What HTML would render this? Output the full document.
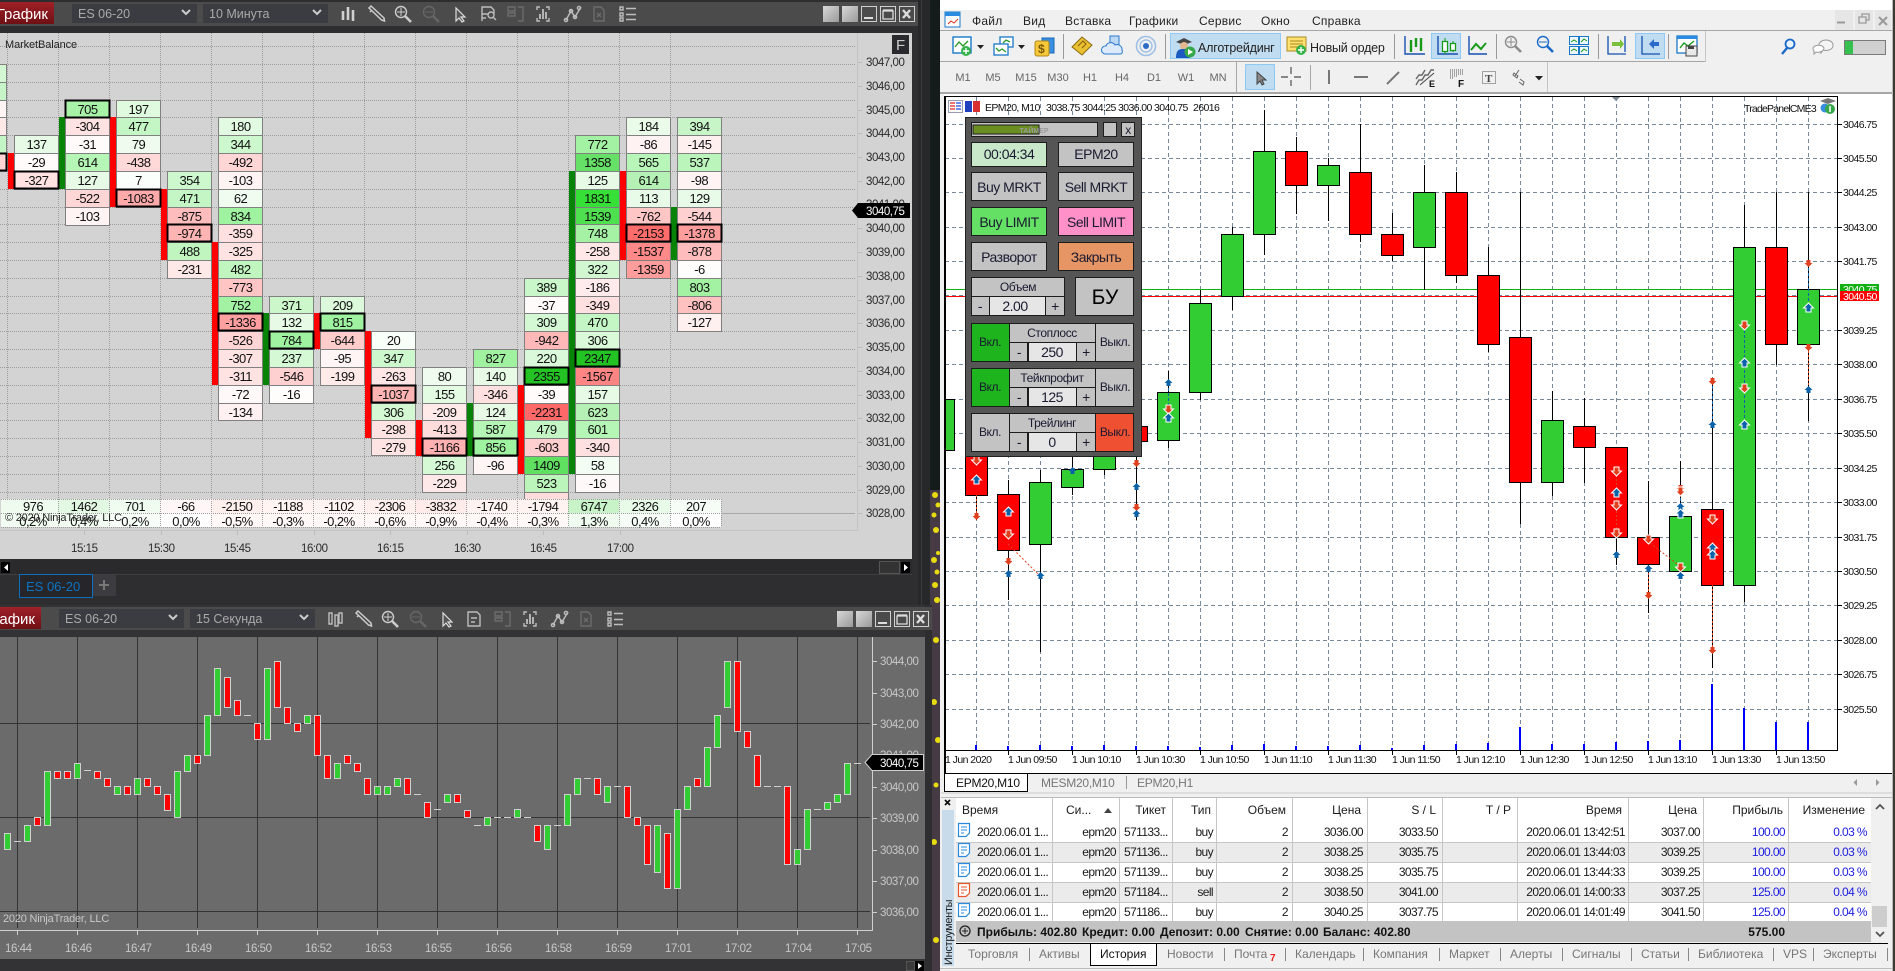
<!DOCTYPE html>
<html><head><meta charset="utf-8"><title>Trading</title>
<style>
html,body{margin:0;padding:0;background:#111;overflow:hidden;width:1895px;height:971px}
svg{display:block}
text{font-family:"Liberation Sans","Noto Sans CJK JP",sans-serif;font-size:12px;fill:#111}
.c rect{width:44px;height:18px;stroke:#808080;stroke-width:1}
.c rect.b{stroke:#000;stroke-width:2;fill:none;height:17px}
.c text{text-anchor:middle;font-size:13px;letter-spacing:-.55px}
.sm text{text-anchor:middle;font-size:13px;letter-spacing:-.55px}
.ax text{fill:#2a2a2a;font-size:11.5px;letter-spacing:-.45px}
.ax2 text{fill:#c8c8c8;font-size:11.5px;letter-spacing:-.45px}
.tag{fill:#fff;font-size:11.5px;letter-spacing:-.45px}
.tb{fill:none;stroke:#bdbdbd;stroke-width:1.4}
.tbd{fill:none;stroke:#6c6c6c;stroke-width:1.4}
.m text{font-size:12px;fill:#222;letter-spacing:.25px}
.tf text{font-size:11px;fill:#666;text-anchor:middle}
.pa text{font-size:10.5px;letter-spacing:-.6px;fill:#111}
.tl text{font-size:10.5px;letter-spacing:-.55px;fill:#111}
.hd{font-size:10.5px;letter-spacing:-.6px}
.btn rect{stroke:#1c1c1c;stroke-width:1}
.btn text{text-anchor:middle;font-size:14px;letter-spacing:-.5px;fill:#1a1a30}
.btn .s{font-size:12px;letter-spacing:-.4px}
.tbl text{fill:#1a1a1a}
.r text{text-anchor:end}
.d text{letter-spacing:-.6px}
.bl text{fill:#1c1ce0;letter-spacing:-.6px}
.tabs text{fill:#777}
.hb text{font-weight:bold;font-size:12px;fill:#111}
</style></head><body>
<svg xmlns="http://www.w3.org/2000/svg" width="1895" height="971" viewBox="0 0 1895 971">
<defs>
<g id="zp"><circle cx="-2" cy="-2" r="5.5" fill="none" stroke-width="1.4"/><path d="M2-2h-8M-2-6V2" stroke-width="1"/><path d="M2 2l6 6" stroke-width="2.6"/></g>
<g id="zm"><circle cx="-2" cy="-2" r="5.5" fill="none" stroke-width="1.4"/><path d="M2-2h-8" stroke-width="1"/><path d="M2 2l6 6" stroke-width="2.6"/></g>
<path id="mb" d="M0-4L4 0H2V3H-2V0H-4z" fill="#0a62a8"/>
<path id="mr" d="M0 4L4 0H2V-3H-2V0H-4z" fill="#e0401e"/>
<path id="mbo" d="M0-5L5 0H2.5V4H-2.5V0H-5z" fill="#0a62a8" stroke="#fff"/>
<path id="mro" d="M0 5L5 0H2.5V-4H-2.5V0H-5z" fill="#e0401e" stroke="#fff"/>
<g id="doc"><path d="M.5.5H11.5V10L8 13.5H.5z" fill="#fff" stroke="currentColor" stroke-width="1.2"/><path d="M3 4h6M3 7h6M3 10h3" stroke="currentColor" fill="none"/></g>
<linearGradient id="red" x1="0" y1="0" x2="0" y2="1"><stop offset="0" stop-color="#a02028"/><stop offset="1" stop-color="#6e1014"/></linearGradient>
<linearGradient id="wb" x1="0" y1="0" x2="1" y2="1"><stop offset="0" stop-color="#d8d8d8"/><stop offset="1" stop-color="#9a9a9a"/></linearGradient>
</defs>

<!-- wallpaper -->
<rect x="918" y="0" width="24" height="490" fill="#131c1a"/>
<rect x="925" y="490" width="17" height="481" fill="#463a44"/>
<rect x="1890" y="0" width="5" height="971" fill="#3a3a30"/>
<g fill="#e8dc10"><circle cx="935" cy="495" r="3"/><circle cx="938" cy="505" r="2.5"/><circle cx="934" cy="515" r="2.5"/><circle cx="936" cy="530" r="3"/><circle cx="938" cy="553" r="2"/><circle cx="934" cy="560" r="3"/><circle cx="937" cy="572" r="2.5"/><circle cx="935" cy="585" r="3"/><circle cx="937" cy="600" r="3"/><circle cx="936" cy="640" r="3"/><circle cx="934" cy="702" r="3"/><circle cx="938" cy="740" r="3"/><circle cx="936" cy="785" r="2.5"/><circle cx="934" cy="842" r="3"/><circle cx="936" cy="940" r="3"/></g>

<!-- TOP WINDOW -->
<rect x="0" y="0" width="918" height="605" fill="#2e2e30"/>
<rect x="918" y="0" width="12" height="605" fill="#26282a"/>
<rect x="921" y="0" width="1" height="605" fill="#3c3c3e"/>
<rect x="0" y="2" width="918" height="24" fill="#4b4b4b"/>
<rect x="0" y="2" width="54" height="22" fill="url(#red)"/>
<text x="48" y="19" text-anchor="end" style="font-size:15px;fill:#fff">График</text>
<rect x="72" y="4" width="125" height="19" fill="#3b3b42"/><text x="78" y="18" style="font-size:12.5px;fill:#aaa">ES 06-20</text>
<path d="M182 10l4 4 4-4" fill="none" stroke="#ccc" stroke-width="2"/>
<rect x="203" y="4" width="125" height="19" fill="#3b3b42"/><text x="209" y="18" style="font-size:12.5px;fill:#aaa">10 Минута</text>
<path d="M313 10l4 4 4-4" fill="none" stroke="#ccc" stroke-width="2"/>
<path d="M343 11v9M348 7v13M353 10v11" stroke="#d0d0d0" stroke-width="2.6" fill="none"/>
<path d="M369 8l2-2 13 12 .5 3-3-1zM372 10l-2 2" fill="none" stroke="#ccc" stroke-width="1.5"/>
<use href="#zp" x="403" y="14" stroke="#ccc"/>
<use href="#zm" x="431" y="14" stroke="#666"/>
<path d="M456 8v13l3-3 3 4 2-1-3-4h4z" fill="#555" stroke="#ddd" stroke-width="1.2"/>
<path class="tb" d="M482 21V7h9l3 3v4M482 14h6M482 18h4"/><circle cx="491" cy="15" r="3" class="tb"/><path d="M493 17l3 3" class="tb"/>
<path class="tbd" d="M508 7h7v4h-7zM508 13h7v3h-7zM518 7h5v14h-5"/>
<path class="tb" d="M537 10V7h3M546 7h3v3M537 18v3h3M546 21h3v-3"/><path d="M540 19v-5M543 19V9M546 19v-7" stroke="#ccc" stroke-width="1.6" fill="none"/>
<path class="tb" d="M566 20l5-9 4 6 6-10"/><circle cx="566" cy="20" r="1.6" class="tb"/><circle cx="571" cy="11" r="1.6" class="tb"/><circle cx="575" cy="17" r="1.6" class="tb"/><circle cx="579" cy="8" r="1.6" class="tb"/>
<path class="tbd" d="M594 7h7l3 3v11h-10zM597 13l4 4M601 13l-4 4"/>
<path class="tb" d="M620 7h3v3h-3zM620 13h3v3h-3zM620 18h3v3h-3zM626 8.500h10M626 14.500h10M626 19.500h10"/>
<g><rect x="823" y="6" width="16" height="16" fill="url(#wb)"/><rect x="842" y="6" width="16" height="16" fill="url(#wb)"/>
<g fill="none" stroke="#cfcfcf"><rect x="861.500" y="6.500" width="15" height="15"/><rect x="880.500" y="6.500" width="15" height="15"/><rect x="899.500" y="6.500" width="15" height="15"/></g>
<path d="M864 18h9" stroke="#ddd" stroke-width="2"/><path d="M883 11h10v8h-10z M883 10h10" fill="none" stroke="#ddd" stroke-width="1.3"/><path d="M903 10l7 8M910 10l-7 8" stroke="#ddd" stroke-width="2.4"/></g>

<rect x="0" y="33" width="912" height="526" fill="#d3d3d3"/>
<path d="M857.500 33V530M0 530.500H858M0 513.500H855" stroke="#c4c4c4" fill="none"/>
<path d="M721 513.500H855" stroke="#a8a8a8" fill="none"/>
<path fill="none" stroke="#9d9d9d" stroke-dasharray="1 1" d="M0 46.500H855M0 64.500H855M0 82.500H855M0 100.500H855M0 117.500H855M0 135.500H855M0 153.500H855M0 171.500H855M0 189.500H855M0 207.500H855M0 224.500H855M0 242.500H855M0 260.500H855M0 278.500H855M0 296.500H855M0 313.500H855M0 331.500H855M0 349.500H855M0 367.500H855M0 385.500H855M0 403.500H855M0 420.500H855M0 438.500H855M0 456.500H855M0 474.500H855M0 492.500H855M7.500 33V527M58.500 33V527M109.500 33V527M160.500 33V527M211.500 33V527M262.500 33V527M313.500 33V527M364.500 33V527M415.500 33V527M466.500 33V527M517.500 33V527M568.500 33V527M619.500 33V527M670.500 33V527"/>
<text x="5" y="48" style="font-size:11px;letter-spacing:-.1px;fill:#222">MarketBalance</text>

<!-- delta bars -->
<g fill="#f00"><rect x="8" y="153" width="6" height="36"/><rect x="110" y="117" width="6" height="90"/><rect x="161" y="189" width="6" height="71"/><rect x="212" y="242" width="6" height="143"/><rect x="314" y="313" width="6" height="36"/><rect x="365" y="331" width="6" height="107"/><rect x="416" y="420" width="6" height="36"/><rect x="518" y="385" width="6" height="89"/><rect x="620" y="171" width="6" height="89"/></g>
<g fill="#078307"><rect x="59" y="117" width="6" height="72"/><rect x="263" y="313" width="6" height="72"/><rect x="467" y="403" width="6" height="53"/><rect x="569" y="171" width="6" height="303"/><rect x="671" y="207" width="6" height="53"/></g>

<!-- footprint columns -->
<g class="c">
<g transform="translate(-37.5,0)"><rect y="64.500" fill="#d2f7d2"/><rect y="82.500" fill="#c8f5c8"/><rect y="100.500" fill="#fff4f4"/><rect y="117.500" fill="#ffe8e8"/><rect y="135.500" fill="#c4f5c4"/><rect y="153.500" fill="#ffd4d4"/><rect class="b" y="153.500"/></g>
<g transform="translate(14.5,0)"><rect y="135.500" fill="#e6fae6"/><text x="22" y="149">137</text><rect y="153.500" fill="#fffbfb"/><text x="22" y="167">-29</text><rect y="171.500" fill="#ffe1e1"/><text x="22" y="185">-327</text><rect class="b" y="171.500"/></g>
<g transform="translate(65.5,0)"><rect y="100.500" fill="#a8f2a8"/><text x="22" y="114">705</text><rect y="117.500" fill="#ffe2e2"/><text x="22" y="131">-304</text><rect y="135.500" fill="#fffbfb"/><text x="22" y="149">-31</text><rect y="153.500" fill="#b5f5b5"/><text x="22" y="167">614</text><rect y="171.500" fill="#e6fae6"/><text x="22" y="185">127</text><rect y="189.500" fill="#ffd6d6"/><text x="22" y="203">-522</text><rect y="207.500" fill="#fff4f4"/><text x="22" y="221">-103</text><rect class="b" y="100.500"/></g>
<g transform="translate(116.5,0)"><rect y="100.500" fill="#dffadf"/><text x="22" y="114">197</text><rect y="117.500" fill="#c4f5c4"/><text x="22" y="131">477</text><rect y="135.500" fill="#eefbee"/><text x="22" y="149">79</text><rect y="153.500" fill="#ffd8d8"/><text x="22" y="167">-438</text><rect y="171.500" fill="#fbfffb"/><text x="22" y="185">7</text><rect y="189.500" fill="#ffaaaa"/><text x="22" y="203">-1083</text><rect class="b" y="189.500"/></g>
<g transform="translate(167.5,0)"><rect y="171.500" fill="#cdf7cd"/><text x="22" y="185">354</text><rect y="189.500" fill="#c4f5c4"/><text x="22" y="203">471</text><rect y="207.500" fill="#ffbcbc"/><text x="22" y="221">-875</text><rect y="224.500" fill="#ffb4b4"/><text x="22" y="238">-974</text><rect y="242.500" fill="#c0f5c0"/><text x="22" y="256">488</text><rect y="260.500" fill="#ffe8e8"/><text x="22" y="274">-231</text><rect class="b" y="224.500"/></g>
<g transform="translate(218.5,0)"><rect y="117.500" fill="#e1fae1"/><text x="22" y="131">180</text><rect y="135.500" fill="#cdf7cd"/><text x="22" y="149">344</text><rect y="153.500" fill="#ffd6d6"/><text x="22" y="167">-492</text><rect y="171.500" fill="#fff4f4"/><text x="22" y="185">-103</text><rect y="189.500" fill="#f0fcf0"/><text x="22" y="203">62</text><rect y="207.500" fill="#9ff29f"/><text x="22" y="221">834</text><rect y="224.500" fill="#ffe0e0"/><text x="22" y="238">-359</text><rect y="242.500" fill="#ffe2e2"/><text x="22" y="256">-325</text><rect y="260.500" fill="#c0f5c0"/><text x="22" y="274">482</text><rect y="278.500" fill="#ffc4c4"/><text x="22" y="292">-773</text><rect y="296.500" fill="#a3f2a3"/><text x="22" y="310">752</text><rect y="313.500" fill="#ffa0a0"/><text x="22" y="327">-1336</text><rect y="331.500" fill="#ffd4d4"/><text x="22" y="345">-526</text><rect y="349.500" fill="#ffe2e2"/><text x="22" y="363">-307</text><rect y="367.500" fill="#ffe2e2"/><text x="22" y="381">-311</text><rect y="385.500" fill="#fff8f8"/><text x="22" y="399">-72</text><rect y="403.500" fill="#fff1f1" style="height:17px"/><text x="22" y="417">-134</text><rect class="b" y="313.500"/></g>
<g transform="translate(269.500,0)"><rect y="296.500" fill="#cbf7cb"/><text x="22" y="310">371</text><rect y="313.500" fill="#e6fae6"/><text x="22" y="327">132</text><rect y="331.500" fill="#9ff29f"/><text x="22" y="345">784</text><rect y="349.500" fill="#d5f8d5"/><text x="22" y="363">237</text><rect y="367.500" fill="#ffd0d0"/><text x="22" y="381">-546</text><rect y="385.500" fill="#fffcfc"/><text x="22" y="399">-16</text><rect class="b" y="331.500"/></g>
<g transform="translate(320.500,0)"><rect y="296.500" fill="#dcf9dc"/><text x="22" y="310">209</text><rect y="313.500" fill="#9ff29f"/><text x="22" y="327">815</text><rect y="331.500" fill="#ffcccc"/><text x="22" y="345">-644</text><rect y="349.500" fill="#fff5f5"/><text x="22" y="363">-95</text><rect y="367.500" fill="#ffeaea"/><text x="22" y="381">-199</text><rect class="b" y="313.500"/></g>
<g transform="translate(371.500,0)"><rect y="331.500" fill="#f8fef8"/><text x="22" y="345">20</text><rect y="349.500" fill="#cdf7cd"/><text x="22" y="363">347</text><rect y="367.500" fill="#ffe6e6"/><text x="22" y="381">-263</text><rect y="385.500" fill="#ffb4b4"/><text x="22" y="399">-1037</text><rect y="403.500" fill="#d3f8d3"/><text x="22" y="417">306</text><rect y="420.500" fill="#ffe2e2"/><text x="22" y="434">-298</text><rect y="438.500" fill="#ffe4e4" style="height:17px"/><text x="22" y="452">-279</text><rect class="b" y="385.500"/></g>
<g transform="translate(422.500,0)"><rect y="367.500" fill="#eefbee"/><text x="22" y="381">80</text><rect y="385.500" fill="#e3fae3"/><text x="22" y="399">155</text><rect y="403.500" fill="#ffe9e9"/><text x="22" y="417">-209</text><rect y="420.500" fill="#ffdcdc"/><text x="22" y="434">-413</text><rect y="438.500" fill="#ffb0b0"/><text x="22" y="452">-1166</text><rect y="456.500" fill="#d5f8d5"/><text x="22" y="470">256</text><rect y="474.500" fill="#ffe8e8"/><text x="22" y="488">-229</text><rect class="b" y="438.500"/></g>
<g transform="translate(473.500,0)"><rect y="349.500" fill="#a0f2a0"/><text x="22" y="363">827</text><rect y="367.500" fill="#e6fae6"/><text x="22" y="381">140</text><rect y="385.500" fill="#ffe0e0"/><text x="22" y="399">-346</text><rect y="403.500" fill="#e6fae6"/><text x="22" y="417">124</text><rect y="420.500" fill="#b5f5b5"/><text x="22" y="434">587</text><rect y="438.500" fill="#9ff29f"/><text x="22" y="452">856</text><rect y="456.500" fill="#fff5f5"/><text x="22" y="470">-96</text><rect class="b" y="438.500"/></g>
<g transform="translate(524.500,0)"><rect y="278.500" fill="#c9f7c9"/><text x="22" y="292">389</text><rect y="296.500" fill="#fffbfb"/><text x="22" y="310">-37</text><rect y="313.500" fill="#d3f8d3"/><text x="22" y="327">309</text><rect y="331.500" fill="#ffb8b8"/><text x="22" y="345">-942</text><rect y="349.500" fill="#daf9da"/><text x="22" y="363">220</text><rect y="367.500" fill="#22c322"/><text x="22" y="381">2355</text><rect y="385.500" fill="#fffbfb"/><text x="22" y="399">-39</text><rect y="403.500" fill="#ff6868"/><text x="22" y="417">-2231</text><rect y="420.500" fill="#c4f5c4"/><text x="22" y="434">479</text><rect y="438.500" fill="#ffcece"/><text x="22" y="452">-603</text><rect y="456.500" fill="#60e060"/><text x="22" y="470">1409</text><rect y="474.500" fill="#bbf5bb"/><text x="22" y="488">523</text><rect y="492.500" fill="#ffdcdc"/><rect class="b" y="367.500"/></g>
<g transform="translate(575.500,0)"><rect y="135.500" fill="#a3f2a3"/><text x="22" y="149">772</text><rect y="153.500" fill="#66e066"/><text x="22" y="167">1358</text><rect y="171.500" fill="#e6fae6"/><text x="22" y="185">125</text><rect y="189.500" fill="#36e036"/><text x="22" y="203">1831</text><rect y="207.500" fill="#4ee04e"/><text x="22" y="221">1539</text><rect y="224.500" fill="#a5f2a5"/><text x="22" y="238">748</text><rect y="242.500" fill="#ffe7e7"/><text x="22" y="256">-258</text><rect y="260.500" fill="#d0f7d0"/><text x="22" y="274">322</text><rect y="278.500" fill="#ffebeb"/><text x="22" y="292">-186</text><rect y="296.500" fill="#ffe0e0"/><text x="22" y="310">-349</text><rect y="313.500" fill="#c4f5c4"/><text x="22" y="327">470</text><rect y="331.500" fill="#d9f9d9"/><text x="22" y="345">306</text><rect y="349.500" fill="#22c322"/><text x="22" y="363">2347</text><rect y="367.500" fill="#ff8484"/><text x="22" y="381">-1567</text><rect y="385.500" fill="#e6fae6"/><text x="22" y="399">157</text><rect y="403.500" fill="#b5f0b5"/><text x="22" y="417">623</text><rect y="420.500" fill="#b5f5b5"/><text x="22" y="434">601</text><rect y="438.500" fill="#ffe0e0"/><text x="22" y="452">-340</text><rect y="456.500" fill="#f4fdf4"/><text x="22" y="470">58</text><rect y="474.500" fill="#fff8f8"/><text x="22" y="488">-16</text><rect class="b" y="349.500"/></g>
<g transform="translate(626.500,0)"><rect y="117.500" fill="#eafbea"/><text x="22" y="131">184</text><rect y="135.500" fill="#fff2f2"/><text x="22" y="149">-86</text><rect y="153.500" fill="#b8f5b8"/><text x="22" y="167">565</text><rect y="171.500" fill="#b5f0b5"/><text x="22" y="185">614</text><rect y="189.500" fill="#e8fbe8"/><text x="22" y="203">113</text><rect y="207.500" fill="#ffc6c6"/><text x="22" y="221">-762</text><rect y="224.500" fill="#ff6c6c"/><text x="22" y="238">-2153</text><rect y="242.500" fill="#ff8888"/><text x="22" y="256">-1537</text><rect y="260.500" fill="#ff9c9c"/><text x="22" y="274">-1359</text><rect class="b" y="224.500"/></g>
<g transform="translate(677.500,0)"><rect y="117.500" fill="#c8f5c8"/><text x="22" y="131">394</text><rect y="135.500" fill="#fff0f0"/><text x="22" y="149">-145</text><rect y="153.500" fill="#bcf5bc"/><text x="22" y="167">537</text><rect y="171.500" fill="#fff3f3"/><text x="22" y="185">-98</text><rect y="189.500" fill="#e8fbe8"/><text x="22" y="203">129</text><rect y="207.500" fill="#ffd0d0"/><text x="22" y="221">-544</text><rect y="224.500" fill="#ff9c9c"/><text x="22" y="238">-1378</text><rect y="242.500" fill="#ffbcbc"/><text x="22" y="256">-878</text><rect y="260.500" fill="#fffcfc"/><text x="22" y="274">-6</text><rect y="278.500" fill="#a3f2a3"/><text x="22" y="292">803</text><rect y="296.500" fill="#ffc0c0"/><text x="22" y="310">-806</text><rect y="313.500" fill="#fff0f0"/><text x="22" y="327">-127</text><rect class="b" y="224.500"/></g>
</g>

<!-- summary rows -->
<g>
<rect x="1" y="499" width="57" height="14" fill="#eefbee"/><rect x="58" y="499" width="51" height="14" fill="#e3f8e3"/><rect x="109" y="499" width="51" height="14" fill="#f1fcf1"/><rect x="160" y="499" width="51" height="14" fill="#fff7f7"/><rect x="211" y="499" width="51" height="14" fill="#fff0ee"/><rect x="262" y="499" width="51" height="14" fill="#fff4f2"/><rect x="313" y="499" width="51" height="14" fill="#fff4f2"/><rect x="364" y="499" width="51" height="14" fill="#ffefed"/><rect x="415" y="499" width="51" height="14" fill="#ffecea"/><rect x="466" y="499" width="51" height="14" fill="#fff3f1"/><rect x="517" y="499" width="51" height="14" fill="#fff3f1"/><rect x="568" y="499" width="51" height="14" fill="#c8f2c8"/><rect x="619" y="499" width="51" height="14" fill="#e8fae8"/><rect x="670" y="499" width="51" height="14" fill="#f6fdf6"/>
<rect x="1" y="513" width="108" height="14" fill="#f2fcf2"/><rect x="109" y="513" width="51" height="14" fill="#f8fef8"/><rect x="160" y="513" width="51" height="14" fill="#fff"/><rect x="211" y="513" width="357" height="14" fill="#fff8f7"/><rect x="568" y="513" width="51" height="14" fill="#eefbee"/><rect x="619" y="513" width="51" height="14" fill="#f6fdf6"/><rect x="670" y="513" width="51" height="14" fill="#fff"/>
<path fill="none" stroke="#9d9d9d" stroke-dasharray="1 1" d="M1 513.500H721M1 499.500H721M1 527.500H721M58.500 499V527M109.500 499V527M160.500 499V527M211.500 499V527M262.500 499V527M313.500 499V527M364.500 499V527M415.500 499V527M466.500 499V527M517.500 499V527M568.500 499V527M619.500 499V527M670.500 499V527M721.500 499V527"/>
<g class="sm"><text x="33" y="511">976</text><text x="84" y="511">1462</text><text x="135" y="511">701</text><text x="186" y="511">-66</text><text x="237" y="511">-2150</text><text x="288" y="511">-1188</text><text x="339" y="511">-1102</text><text x="390" y="511">-2306</text><text x="441" y="511">-3832</text><text x="492" y="511">-1740</text><text x="543" y="511">-1794</text><text x="594" y="511">6747</text><text x="645" y="511">2326</text><text x="696" y="511">207</text>
<text x="33" y="526">0,2%</text><text x="84" y="526">0,4%</text><text x="135" y="526">0,2%</text><text x="186" y="526">0,0%</text><text x="237" y="526">-0,5%</text><text x="288" y="526">-0,3%</text><text x="339" y="526">-0,2%</text><text x="390" y="526">-0,6%</text><text x="441" y="526">-0,9%</text><text x="492" y="526">-0,4%</text><text x="543" y="526">-0,3%</text><text x="594" y="526">1,3%</text><text x="645" y="526">0,4%</text><text x="696" y="526">0,0%</text></g>
<text x="5" y="521" style="font-size:11px;letter-spacing:-.2px;fill:#222">© 2020 NinjaTrader, LLC</text>
</g>

<!-- top axes -->
<g class="ax">
<text x="866" y="66">3047,00</text><text x="866" y="90">3046,00</text><text x="866" y="114">3045,00</text><text x="866" y="137">3044,00</text><text x="866" y="161">3043,00</text><text x="866" y="185">3042,00</text><text x="866" y="208">3041,00</text><text x="866" y="232">3040,00</text><text x="866" y="256">3039,00</text><text x="866" y="280">3038,00</text><text x="866" y="304">3037,00</text><text x="866" y="327">3036,00</text><text x="866" y="351">3035,00</text><text x="866" y="375">3034,00</text><text x="866" y="399">3033,00</text><text x="866" y="422">3032,00</text><text x="866" y="446">3031,00</text><text x="866" y="470">3030,00</text><text x="866" y="494">3029,00</text><text x="866" y="517">3028,00</text>
<text x="71" y="552">15:15</text><text x="148" y="552">15:30</text><text x="224" y="552">15:45</text><text x="301" y="552">16:00</text><text x="377" y="552">16:15</text><text x="454" y="552">16:30</text><text x="530" y="552">16:45</text><text x="607" y="552">17:00</text>
</g>
<path d="M858 62.500h4M858 86.500h4M858 110.500h4M858 133.500h4M858 157.500h4M858 181.500h4M858 228.500h4M858 252.500h4M858 276.500h4M858 300.500h4M858 323.500h4M858 347.500h4M858 371.500h4M858 395.500h4M858 418.500h4M858 442.500h4M858 466.500h4M858 490.500h4M858 513.500h4M84.500 530v5M161.500 530v5M237.500 530v5M314.500 530v5M390.500 530v5M467.500 530v5M543.500 530v5M620.500 530v5" stroke="#bcbcbc" fill="none"/>
<path d="M852 210.500l6-7.500H910V218H858z" fill="#000"/><text x="866" y="215" class="tag">3040,75</text>
<rect x="892" y="35" width="17" height="19" fill="#2a2a2e"/><text x="896" y="50" style="font-size:15px;fill:#ccc">F</text>

<!-- scroll band + tab -->
<rect x="0" y="559" width="912" height="15" fill="#2a2a2c"/>
<rect x="0" y="574" width="912" height="1" fill="#3e3e40"/>
<rect x="1" y="562" width="9" height="11" fill="#000"/><path d="M8 564v7l-4-3.500z" fill="#fff"/>
<rect x="901" y="562" width="9" height="11" fill="#000"/><path d="M904 564v7l4-3.500z" fill="#fff"/>
<rect x="879.500" y="561.500" width="20" height="12" fill="#333" stroke="#555"/>
<rect x="19.500" y="574.500" width="73" height="23" fill="#26262a" stroke="#0b6fbe"/><text x="26" y="591" style="font-size:13px;fill:#0b74c4">ES 06-20</text>
<rect x="93" y="575" width="23" height="21" fill="#3c3c40"/><path d="M99 585h10M104 580v10" stroke="#777" stroke-width="2"/>

<!-- BOTTOM WINDOW -->
<rect x="0" y="605" width="925" height="366" fill="#333335"/>
<rect x="925" y="605" width="7" height="366" fill="#2e2e30"/>
<rect x="0" y="607" width="932" height="23" fill="#4b4b4b"/>
<rect x="0" y="607" width="41" height="22" fill="url(#red)"/>
<text x="35" y="624" text-anchor="end" style="font-size:15px;fill:#fff">График</text>
<rect x="59" y="609" width="125" height="19" fill="#3b3b42"/><text x="65" y="623" style="font-size:12.5px;fill:#aaa">ES 06-20</text>
<path d="M169 615l4 4 4-4" fill="none" stroke="#ccc" stroke-width="2"/>
<rect x="190" y="609" width="125" height="19" fill="#3b3b42"/><text x="196" y="623" style="font-size:12.5px;fill:#aaa">15 Секунда</text>
<path d="M300 615l4 4 4-4" fill="none" stroke="#ccc" stroke-width="2"/>
<path class="tb" d="M329 613h3v11h-3zM335 615h3v11h-3zM339 613h3v10h-3z"/>
<path d="M356 613l2-2 13 12 .5 3-3-1zM359 615l-2 2" fill="none" stroke="#ccc" stroke-width="1.5"/>
<use href="#zp" x="390" y="619" stroke="#ccc"/>
<use href="#zm" x="418" y="619" stroke="#666"/>
<path d="M443 613v13l3-3 3 4 2-1-3-4h4z" fill="#555" stroke="#ddd" stroke-width="1.2"/>
<path class="tb" d="M468 626V612h9l3 3v11zM471 618h6M471 622h4"/>
<path class="tbd" d="M495 612h7v4h-7zM495 618h7v3h-7zM505 612h5v14h-5"/>
<path class="tb" d="M524 615v-3h3M533 612h3v3M524 623v3h3M533 626h3v-3"/><path d="M527 624v-5M530 624v-10M533 624v-7" stroke="#ccc" stroke-width="1.6" fill="none"/>
<path class="tb" d="M553 625l5-9 4 6 6-10"/><circle cx="553" cy="625" r="1.6" class="tb"/><circle cx="558" cy="616" r="1.6" class="tb"/><circle cx="562" cy="622" r="1.6" class="tb"/><circle cx="566" cy="613" r="1.6" class="tb"/>
<path class="tbd" d="M581 612h7l3 3v11h-10zM584 618l4 4M588 618l-4 4"/>
<path class="tb" d="M608 612h3v3h-3zM608 618h3v3h-3zM608 623h3v3h-3zM614 613.500h9M614 619.500h9M614 624.500h9"/>
<rect x="837" y="611" width="16" height="16" fill="url(#wb)"/><rect x="856" y="611" width="16" height="16" fill="url(#wb)"/>
<g fill="none" stroke="#cfcfcf"><rect x="875.500" y="611.500" width="15" height="15"/><rect x="894.500" y="611.500" width="15" height="15"/><rect x="913.500" y="611.500" width="15" height="15"/></g>
<path d="M878 623h9" stroke="#ddd" stroke-width="2"/><path d="M897 616h10v8h-10z M897 615h10" fill="none" stroke="#ddd" stroke-width="1.3"/><path d="M917 615l7 8M924 615l-7 8" stroke="#ddd" stroke-width="2.4"/>

<rect x="0" y="637" width="925" height="322" fill="#6b6b6b"/>
<path d="M17.500 637V928M77.500 637V928M137.500 637V928M197.500 637V928M257.500 637V928M317.500 637V928M377.500 637V928M437.500 637V928M497.500 637V928M557.500 637V928M617.500 637V928M677.500 637V928M737.500 637V928M797.500 637V928M857.500 637V928M0 723.500H870M0 817.500H870M0 911.500H870" stroke="#343434" fill="none"/>
<path d="M872.500 637V930.500H0M17.500 930v5M77.500 930v5M137.500 930v5M197.500 930v5M257.500 930v5M317.500 930v5M377.500 930v5M437.500 930v5M497.500 930v5M557.500 930v5M617.500 930v5M677.500 930v5M737.500 930v5M797.500 930v5M857.500 930v5M872 661.500h5M872 693.500h5M872 724.500h5M872 787.500h5M872 818.500h5M872 850.500h5M872 881.500h5M872 912.500h5" stroke="#cfcfcf" fill="none"/>
<path fill="#32cd32" stroke="#cfcfcf" d="M4.500 833.500h6v16h-6zM24.500 825.500h6v16h-6zM44.500 771.500h6v54h-6zM74.500 763.500h6v15h-6zM114.500 786.500h6v8h-6zM134.500 778.500h6v16h-6zM174.500 771.500h6v46h-6zM184.500 755.500h6v16h-6zM204.500 715.500h6v40h-6zM214.500 668.500h6v47h-6zM264.500 668.500h6v71h-6zM304.500 715.500h6v8h-6zM334.500 763.500h6v15h-6zM374.500 786.500h6v8h-6zM384.500 786.500h6v8h-6zM394.500 778.500h6v8h-6zM444.500 794.500h6v8h-6zM484.500 817.500h6v8h-6zM514.500 809.500h6v8h-6zM544.500 825.500h6v24h-6zM564.500 794.500h6v31h-6zM574.500 778.500h6v16h-6zM604.500 786.500h6v16h-6zM654.500 825.500h6v47h-6zM674.500 809.500h6v79h-6zM684.500 786.500h6v23h-6zM704.500 747.500h6v39h-6zM714.500 715.500h6v32h-6zM724.500 661.500h6v46h-6zM794.500 849.500h6v15h-6zM804.500 809.500h6v40h-6zM824.500 802.500h6v7h-6zM834.500 794.500h6v8h-6zM844.500 763.500h6v31h-6z"/>
<path fill="#f00" stroke="#cfcfcf" d="M34.500 817.500h6v8h-6zM54.500 771.500h6v7h-6zM64.500 771.500h6v7h-6zM94.500 771.500h6v7h-6zM104.500 778.500h6v8h-6zM124.500 786.500h6v8h-6zM144.500 778.500h6v8h-6zM154.500 786.500h6v8h-6zM164.500 794.500h6v16h-6zM194.500 755.500h6v8h-6zM224.500 677.500h6v30h-6zM234.500 700.500h6v15h-6zM254.500 723.500h6v16h-6zM274.500 661.500h6v46h-6zM284.500 707.500h6v16h-6zM294.500 723.500h6v8h-6zM314.500 715.500h6v40h-6zM324.500 755.500h6v23h-6zM344.500 755.500h6v8h-6zM354.500 763.500h6v8h-6zM364.500 778.500h6v16h-6zM404.500 778.500h6v16h-6zM424.500 802.500h6v15h-6zM454.500 794.500h6v8h-6zM464.500 810.500h6v7h-6zM534.500 825.500h6v16h-6zM594.500 778.500h6v16h-6zM624.500 786.500h6v31h-6zM634.500 817.500h6v8h-6zM644.500 825.500h6v39h-6zM664.500 833.500h6v55h-6zM694.500 778.500h6v8h-6zM734.500 661.500h6v70h-6zM744.500 731.500h6v16h-6zM754.500 755.500h6v31h-6zM784.500 786.500h6v78h-6z"/>
<path stroke="#cfcfcf" fill="none" d="M14 841.500h7M84 770.500h7M244 715.500h7M414 794.500h7M434 809.500h7M474 825.500h7M494 817.500h7M504 817.500h7M524 817.500h7M554 825.500h7M584 778.500h7M614 786.500h7M764 786.500h7M774 786.500h7M814 809.500h7M854 763.500h7"/>
<g class="ax2"><text x="880" y="665">3044,00</text><text x="880" y="697">3043,00</text><text x="880" y="728">3042,00</text><text x="880" y="759">3041,00</text><text x="880" y="791">3040,00</text><text x="880" y="822">3039,00</text><text x="880" y="854">3038,00</text><text x="880" y="885">3037,00</text><text x="880" y="916">3036,00</text>
<text x="5" y="952">16:44</text><text x="65" y="952">16:46</text><text x="125" y="952">16:47</text><text x="185" y="952">16:49</text><text x="245" y="952">16:50</text><text x="305" y="952">16:52</text><text x="365" y="952">16:53</text><text x="425" y="952">16:55</text><text x="485" y="952">16:56</text><text x="545" y="952">16:58</text><text x="605" y="952">16:59</text><text x="665" y="952">17:01</text><text x="725" y="952">17:02</text><text x="785" y="952">17:04</text><text x="845" y="952">17:05</text>
<text x="3" y="922" style="font-size:11px;letter-spacing:-.2px">2020 NinjaTrader, LLC</text></g>
<path d="M865 762.500l7-8H923.500V770.500H872z" fill="#000" stroke="#cfcfcf"/><text x="880" y="767" class="tag">3040,75</text>
<rect x="906.500" y="961.500" width="8" height="9" fill="#3a3a3a" stroke="#555"/>
<rect x="915" y="961" width="9" height="10" fill="#000"/><path d="M918 963v6l4-3z" fill="#fff"/>

<!-- MT5 WINDOW -->
<rect x="940" y="0" width="952" height="971" fill="#f0f0f0"/>
<rect x="940" y="0" width="952" height="10" fill="#fff"/>
<rect x="1892" y="0" width="1" height="971" fill="#bbb"/>
<rect x="1835" y="10" width="18" height="20" fill="#e6e6e6"/><rect x="1855" y="10" width="18" height="20" fill="#e6e6e6"/><rect x="1875" y="10" width="16" height="20" fill="#e6e6e6"/>
<path d="M1837 22.500h8" stroke="#999" stroke-width="2"/><path d="M1859 17h7v6h-7zM1862 17v-3h7v6h-3" fill="none" stroke="#999" stroke-width="1.3"/><path d="M1879 17l8 8M1887 17l-8 8" stroke="#999" stroke-width="2"/>
<g>
<rect x="945" y="12" width="15" height="15" fill="#fff" stroke="#1a78c8"/><rect x="945" y="12" width="15" height="4" fill="#2b8be0"/><path d="M948 24l3-3 3 2 4-4" stroke="#e0301e" fill="none"/>
</g>
<g class="m"><text x="972" y="25">Файл</text><text x="1023" y="25">Вид</text><text x="1065" y="25">Вставка</text><text x="1129" y="25">Графики</text><text x="1199" y="25">Сервис</text><text x="1261" y="25">Окно</text><text x="1312" y="25">Справка</text></g>
<rect x="940" y="30" width="952" height="1" fill="#a6a6a6"/>
<rect x="940" y="61" width="765" height="1" fill="#a6a6a6"/><rect x="1705" y="31" width="1" height="31" fill="#c6c6c6"/>
<rect x="1547" y="62" width="1" height="30" fill="#c6c6c6"/>
<rect x="940" y="92" width="952" height="2" fill="#a6a6a6"/>

<!-- toolbar 1 icons -->
<g>
<rect x="953" y="37" width="18" height="16" fill="#fff" stroke="#1a78c8" stroke-width="1.4"/><path d="M955 47l4-5 4 4 5-5" fill="none" stroke="#2a9a2a" stroke-width="1.4"/><circle cx="966" cy="51" r="5" fill="#37b24a"/><path d="M963 51h6M966 48v6" stroke="#fff" stroke-width="1.4"/>
<path d="M977 45h7l-3.500 4z" fill="#222"/>
<rect x="1000" y="37" width="13" height="10" fill="#fff" stroke="#1a78c8" stroke-width="1.3"/><rect x="994" y="44" width="14" height="11" fill="#fff" stroke="#1a78c8" stroke-width="1.3"/><path d="M996 48l3 3 3-2 4 3M1003 43l3-3 4 2" fill="none" stroke="#2a9a2a" stroke-width="1.3"/>
<path d="M1018 45h7l-3.500 4z" fill="#222"/>
<rect x="1042" y="38" width="12" height="15" fill="#3a8ee0" stroke="#1a6ab8"/><rect x="1035" y="41" width="14" height="15" rx="2" fill="#f6c838" stroke="#b08818"/><text x="1038" y="53" style="font-size:12px;font-weight:bold;fill:#7a5a08">$</text>
<rect x="1063" y="34" width="1" height="25" fill="#999"/>
<path d="M1072 47l10-10 10 8-10 10z" fill="#e8c030" stroke="#8a6a10"/><path d="M1078 46l5-5 3 3-4 4" stroke="#8a5a10" fill="none"/>
<path d="M1110 36h9v12h-9z" fill="#bcd8f4" stroke="#2a7ad0"/><path d="M1105 54a4 4 0 0 1 1-8 5 5 0 0 1 9-1 5 5 0 0 1 7 5 3 3 0 0 1-1 4z" fill="#dceafa" stroke="#2a7ad0"/>
<circle cx="1146" cy="46" r="9.500" fill="none" stroke="#9fc0e4" stroke-width="1.6"/><circle cx="1146" cy="46" r="6" fill="none" stroke="#9fc0e4" stroke-width="1.4"/><circle cx="1146" cy="46" r="3" fill="#2a6ac8"/>
<rect x="1165" y="34" width="1" height="25" fill="#999"/>
<rect x="1170.500" y="33.500" width="110" height="25" fill="#c0dcf0" stroke="#90c8f6"/>
<path d="M1176 42l8-4 8 4-8 3z" fill="#444"/><circle cx="1184" cy="46" r="4" fill="#e4b890"/><path d="M1176 58c0-9 4-9 8-9s6 2 6 9z" fill="#1a5ac0"/><circle cx="1190" cy="52" r="5.500" fill="#37a84a"/><path d="M1188 49l5 3-5 3z" fill="#fff"/>
<text x="1198" y="52" style="font-size:12.5px;letter-spacing:-.2px;fill:#222">Алготрейдинг</text>
<rect x="1287" y="37" width="19" height="14" fill="#ffe070" stroke="#a88a20"/><path d="M1290 41h13M1290 44h13M1290 47h9" stroke="#a88a20"/><circle cx="1301" cy="50" r="5" fill="#37b24a"/><path d="M1298 50h6M1301 47v6" stroke="#fff" stroke-width="1.4"/>
<text x="1310" y="52" style="font-size:12.5px;letter-spacing:-.2px;fill:#222">Новый ордер</text>
<rect x="1394" y="34" width="1" height="25" fill="#999"/>
<path d="M1405 36v18h20" fill="none" stroke="#1450b0" stroke-width="1.4"/><path d="M1405 54h20" stroke="#1450b0"/><path d="M1411 40v12M1416 38v9M1421 38v13" stroke="#1a9a1a" stroke-width="2.4"/>
<rect x="1431.500" y="33.500" width="29" height="25" fill="#c0dcf0" stroke="#90c8f6"/>
<path d="M1438 36v18h20" fill="none" stroke="#1450b0" stroke-width="1.400"/><rect x="1442.500" y="41.500" width="5" height="10" fill="#fff" stroke="#1a9a1a" stroke-width="1.3"/><rect x="1450.500" y="43.500" width="5" height="7" fill="#fff" stroke="#1a9a1a" stroke-width="1.3"/><path d="M1445 38v3M1445 51v3M1453 41v2M1453 50v2" stroke="#1a9a1a"/>
<path d="M1469 36v18h18" fill="none" stroke="#1450b0" stroke-width="1.4"/><path d="M1471 50l5-6 5 5 5-6" fill="none" stroke="#1a9a1a" stroke-width="2"/>
<rect x="1496" y="34" width="1" height="25" fill="#999"/>
<use href="#zp" x="1513" y="44" stroke="#8a8a8a"/>
<use href="#zm" x="1545" y="44" stroke="#1a6ac8"/>
<g fill="#eef6ff" stroke="#1a78c8"><rect x="1569.500" y="36.500" width="9" height="8"/><rect x="1579.500" y="36.500" width="9" height="8"/><rect x="1569.500" y="46.500" width="9" height="8"/><rect x="1579.500" y="46.500" width="9" height="8"/></g><path d="M1571 42l3-2 3 2M1581 42l3-3 3 2M1571 51l3-2 3 2M1581 52l3-3 3 2" fill="none" stroke="#1a9a1a"/>
<rect x="1598" y="34" width="1" height="25" fill="#999"/>
<path d="M1608 36v18h18M1625 36v16" fill="none" stroke="#1450b0" stroke-width="1.3"/><path d="M1612 42h8v-3l4 5-4 5v-3h-8z" fill="#7ac03a"/>
<rect x="1635.500" y="33.500" width="29" height="25" fill="#c0dcf0" stroke="#90c8f6"/>
<path d="M1642 36v18h18" fill="none" stroke="#1450b0" stroke-width="1.3"/><path d="M1659 42h-5v-3l-5 5 5 5v-3h5z" fill="#2a6ac8"/>
<rect x="1668" y="34" width="1" height="25" fill="#999"/>
<rect x="1677" y="36" width="20" height="17" fill="#fff" stroke="#1a78c8" stroke-width="1.3"/><rect x="1677" y="36" width="20" height="3" fill="#2a8be0"/><path d="M1680 48l4-5 4 3 6-5" fill="none" stroke="#1a9a1a" stroke-width="1.400"/><rect x="1686" y="46" width="11" height="10" fill="#e8e8e8" stroke="#444"/><rect x="1688" y="46" width="6" height="3" fill="#444"/>
<circle cx="1790" cy="44" r="4.500" fill="#eaf4ff" stroke="#1a6ac8" stroke-width="1.800"/><path d="M1787 48l-5 6" stroke="#1a6ac8" stroke-width="2.400"/>
<path d="M1819 45a7 5 0 0 1 14 0 7 5 0 0 1-10 5l-2 3v-4a5 5 0 0 1-2-4z" fill="#f4f4f4" stroke="#999"/><path d="M1813 48a6 4.500 0 0 1 11 0 6 4.500 0 0 1-8 4l-2 2v-3a4 4 0 0 1-1-3z" fill="#fff" stroke="#999"/>
<rect x="1844.500" y="40.500" width="41" height="14" fill="#d0d0d0" stroke="#7a7a7a"/><rect x="1845" y="41" width="8" height="13" fill="#36c050"/>
</g>

<!-- toolbar 2 -->
<g class="tf"><text x="963" y="81">M1</text><text x="993" y="81">M5</text><text x="1026" y="81">M15</text><text x="1058" y="81">M30</text><text x="1090" y="81">H1</text><text x="1122" y="81">H4</text><text x="1154" y="81">D1</text><text x="1186" y="81">W1</text><text x="1218" y="81">MN</text></g>
<rect x="1236" y="62" width="1" height="30" fill="#a8a8a8"/>
<rect x="1245.500" y="64.500" width="29" height="25" fill="#c0dcf0" stroke="#90c8f6"/>
<path d="M1257 72v12l3-3 2 4 2-1-2-4h4z" fill="#888" stroke="#444"/>
<path d="M1291 67v7M1291 80v6M1281 77h7M1294 77h7" stroke="#666" stroke-width="1.400"/>
<rect x="1310" y="65" width="1" height="25" fill="#a8a8a8"/>
<path d="M1329 70v14" stroke="#777" stroke-width="2"/><path d="M1354 77h14" stroke="#777" stroke-width="2"/><path d="M1387 84l12-12" stroke="#777" stroke-width="2"/>
<path d="M1416 85l3-5h3l3-5h3l3-5h3M1416 79l3-4h3l3-5" fill="none" stroke="#666" stroke-width="1.400"/><path d="M1420 85l14-12" stroke="#444"/><text x="1429" y="87" style="font-size:9px;font-weight:bold">E</text>
<path d="M1450 70h13M1450 72h13M1450 74h13M1450 76h8M1450 78h4" stroke="#555" stroke-dasharray="1 1"/><text x="1458" y="87" style="font-size:10px;font-weight:bold">F</text>
<rect x="1482.500" y="71.500" width="13" height="12" fill="none" stroke="#555" stroke-dasharray="1 1"/><text x="1485" y="82" style="font-size:11px;font-family:'Liberation Serif',serif;font-weight:bold;fill:#444">T</text>
<path d="M1514 73l4 3-1 2-4-3zM1520 79l4 3-1 3-4-3M1519 70l-4 6" fill="none" stroke="#666"/>
<path d="M1535 76h8l-4 4.500z" fill="#222"/>

<!-- chart -->
<rect x="944" y="94" width="948" height="680" fill="#fff"/>
<path fill="none" stroke="#778899" stroke-dasharray="4 3" d="M945 124.500H1837M945 158.500H1837M945 192.500H1837M945 227.500H1837M945 261.500H1837M945 295.500H1837M945 330.500H1837M945 364.500H1837M945 399.500H1837M945 433.500H1837M945 468.500H1837M945 502.500H1837M945 537.500H1837M945 571.500H1837M945 605.500H1837M945 640.500H1837M945 674.500H1837M945 709.500H1837M976.500 97V750M1008.500 97V750M1040.500 97V750M1072.500 97V750M1104.500 97V750M1136.500 97V750M1168.500 97V750M1200.500 97V750M1232.500 97V750M1264.500 97V750M1296.500 97V750M1328.500 97V750M1360.500 97V750M1392.500 97V750M1424.500 97V750M1456.500 97V750M1488.500 97V750M1520.500 97V750M1552.500 97V750M1584.500 97V750M1616.500 97V750M1648.500 97V750M1680.500 97V750M1712.500 97V750M1744.500 97V750M1776.500 97V750M1808.500 97V750"/>
<path d="M945 289.500H1837" stroke="#12b012"/><path d="M945 296.500H1837" stroke="#f00"/>
<!-- wicks -->
<path stroke="#000" fill="none" d="M976.500 430V520M1008.500 480V600M1040.500 470V652M1072.500 456V495M1104.500 430V475M1136.500 420V520M1168.500 371V448M1200.500 290V400M1232.500 227V310M1264.500 110V255M1296.500 137V214M1328.500 158V221M1360.500 124V242M1392.500 213V261M1424.500 165V290M1456.500 172V283M1488.500 247V352M1520.500 192V524M1552.500 391V496M1584.500 398V483M1616.500 447V565M1648.500 481V613M1680.500 461V578M1712.500 378V668M1744.500 205V602M1776.500 192V365M1808.500 192V421"/>
<!-- bodies -->
<path fill="#32cd32" stroke="#000" d="M945.500 399.500h9v51h-9zM1029.500 482.500h22v62h-22zM1061.500 469.500h22v18h-22zM1093.500 440.500h22v29h-22zM1157.500 392.500h22v48h-22zM1189.500 303.500h22v89h-22zM1221.500 234.500h22v62h-22zM1253.500 151.500h22v83h-22zM1317.500 165.500h22v20h-22zM1413.500 192.500h22v55h-22zM1541.500 420.500h22v62h-22zM1669.500 516.500h22v55h-22zM1733.500 247.500h22v338h-22zM1797.500 289.500h22v55h-22z"/>
<path fill="#f00" stroke="#000" d="M965.500 440.500h22v55h-22zM997.500 494.500h22v56h-22zM1125.500 426.500h22v15h-22zM1285.500 151.500h22v34h-22zM1349.500 172.500h22v62h-22zM1381.500 234.500h22v21h-22zM1445.500 192.500h22v83h-22zM1477.500 275.500h22v69h-22zM1509.500 337.500h22v145h-22zM1573.500 426.500h22v21h-22zM1605.500 447.500h22v90h-22zM1637.500 537.500h22v27h-22zM1701.500 509.500h22v76h-22zM1765.500 247.500h22v97h-22z"/>
<!-- trails -->
<path fill="none" stroke="#e0401e" stroke-dasharray="2 2" d="M1008 544L1040 576M1650 543L1681 567M1712.500 585V650M1808.500 347V390M1648.500 569V595M976.500 495V516M1616.500 471V533"/>
<path fill="none" stroke="#0a62a8" stroke-dasharray="3 2" d="M1712.500 381V425M1744.500 325V425M1808.500 263V308M1680.500 488V507M1168.500 383V418"/>
<!-- markers -->
<use href="#mb" x="1072.500" y="471"/><use href="#mr" x="1136.500" y="463"/><use href="#mb" x="1136.500" y="487"/><use href="#mr" x="1136.500" y="507"/><use href="#mb" x="1136.500" y="514"/>
<use href="#mro" x="976.500" y="460"/><use href="#mbo" x="976.500" y="480"/><use href="#mr" x="976.500" y="516"/><use href="#mbo" x="1008.500" y="512"/><use href="#mro" x="1008.500" y="534"/><use href="#mr" x="1008.500" y="561"/><use href="#mb" x="1008.500" y="574"/><use href="#mb" x="1040.500" y="576"/>
<use href="#mb" x="1168.500" y="383"/><use href="#mro" x="1168.500" y="409"/><use href="#mbo" x="1168.500" y="418"/>
<use href="#mro" x="1616.500" y="471"/><use href="#mbo" x="1616.500" y="493"/><use href="#mro" x="1616.500" y="505"/><use href="#mro" x="1616.500" y="533"/><use href="#mb" x="1616.500" y="555"/>
<use href="#mro" x="1648.500" y="539"/><use href="#mb" x="1648.500" y="569"/><use href="#mr" x="1648.500" y="595"/>
<use href="#mr" x="1680.500" y="488"/><use href="#mro" x="1680.500" y="491"/><use href="#mb" x="1680.500" y="507"/><use href="#mbo" x="1680.500" y="514"/><use href="#mro" x="1680.500" y="567"/><use href="#mb" x="1680.500" y="576"/>
<use href="#mr" x="1712.500" y="381"/><use href="#mb" x="1712.500" y="425"/><use href="#mro" x="1712.500" y="519"/><use href="#mbo" x="1712.500" y="548"/><use href="#mbo" x="1712.500" y="555"/><use href="#mr" x="1712.500" y="650"/>
<use href="#mro" x="1744.500" y="325"/><use href="#mbo" x="1744.500" y="363"/><use href="#mro" x="1744.500" y="388"/><use href="#mbo" x="1744.500" y="425"/>
<use href="#mr" x="1808.500" y="263"/><use href="#mbo" x="1808.500" y="308"/><use href="#mr" x="1808.500" y="347"/><use href="#mb" x="1808.500" y="390"/>
<!-- volumes -->
<path stroke="#00f" stroke-width="2" fill="none" d="M976 745V750M1008 746V750M1040 745V750M1072 746V750M1104 745V750M1136 746V750M1168 746V750M1200 747V750M1232 745V750M1264 744V750M1296 746V750M1328 746V750M1360 745V750M1392 748V750M1424 745V750M1456 744V750M1488 743V750M1520 727V750M1552 744V750M1584 744V750M1616 742V750M1648 741V750M1680 740V750M1712 684V750M1744 708V750M1776 722V750M1808 722V750"/>
<!-- frame -->
<path d="M944.500 773V96.500H1837.500V750.500H944" fill="none" stroke="#000"/>
<rect x="944" y="96" width="2" height="677" fill="#000"/>
<path d="M1612 97h8l-4 4z" fill="#778899"/>
<path d="M944 773.500H1892" stroke="#000"/>
<path d="M1837 124.500h5M1837 158.500h5M1837 192.500h5M1837 227.500h5M1837 261.500h5M1837 330.500h5M1837 364.500h5M1837 399.500h5M1837 433.500h5M1837 468.500h5M1837 502.500h5M1837 537.500h5M1837 571.500h5M1837 605.500h5M1837 640.500h5M1837 674.500h5M1837 709.500h5M1008.500 750v5M1072.500 750v5M1136.500 750v5M1200.500 750v5M1264.500 750v5M1328.500 750v5M1392.500 750v5M1456.500 750v5M1520.500 750v5M1584.500 750v5M1648.500 750v5M1712.500 750v5M1776.500 750v5" stroke="#000" fill="none"/>
<g class="pa"><text x="1843" y="128">3046.75</text><text x="1843" y="162">3045.50</text><text x="1843" y="196">3044.25</text><text x="1843" y="231">3043.00</text><text x="1843" y="265">3041.75</text><text x="1843" y="334">3039.25</text><text x="1843" y="368">3038.00</text><text x="1843" y="403">3036.75</text><text x="1843" y="437">3035.50</text><text x="1843" y="472">3034.25</text><text x="1843" y="506">3033.00</text><text x="1843" y="541">3031.75</text><text x="1843" y="575">3030.50</text><text x="1843" y="609">3029.25</text><text x="1843" y="644">3028.00</text><text x="1843" y="678">3026.75</text><text x="1843" y="713">3025.50</text></g>
<rect x="1840" y="284" width="39" height="8" fill="#12b012"/><text x="1843" y="293" style="font-size:10.5px;letter-spacing:-.6px;fill:#fff">3040.75</text>
<rect x="1840" y="291" width="39" height="10" fill="#f00"/><text x="1843" y="300" style="font-size:10.5px;letter-spacing:-.6px;fill:#fff">3040.50</text>
<g class="tl"><text x="945" y="763">1 Jun 2020</text><text x="1008" y="763">1 Jun 09:50</text><text x="1072" y="763">1 Jun 10:10</text><text x="1136" y="763">1 Jun 10:30</text><text x="1200" y="763">1 Jun 10:50</text><text x="1264" y="763">1 Jun 11:10</text><text x="1328" y="763">1 Jun 11:30</text><text x="1392" y="763">1 Jun 11:50</text><text x="1456" y="763">1 Jun 12:10</text><text x="1520" y="763">1 Jun 12:30</text><text x="1584" y="763">1 Jun 12:50</text><text x="1648" y="763">1 Jun 13:10</text><text x="1712" y="763">1 Jun 13:30</text><text x="1776" y="763">1 Jun 13:50</text></g>
<!-- chart header -->
<rect x="948.500" y="100.500" width="14" height="12" fill="#fff" stroke="#9a9ab0"/><path d="M950 103h5M950 106h5M950 109h5" stroke="#e84040" stroke-width="1.500"/><path d="M956 103h5M956 106h5M956 109h5" stroke="#4060e0" stroke-width="1.500"/>
<rect x="973" y="101" width="7" height="11" fill="#d83030"/><rect x="965" y="101" width="7" height="11" fill="#2040c0"/>
<text x="985" y="111" class="hd">EPM20, M10</text><text x="1046" y="111" class="hd">3038.75</text><text x="1082" y="111" class="hd">3044.25</text><text x="1118" y="111" class="hd">3036.00</text><text x="1154" y="111" class="hd">3040.75</text><text x="1193" y="111" class="hd">26016</text>
<text x="1744" y="112" style="font-size:10.5px;letter-spacing:-.8px">TradePanelCME3</text>
<path d="M1820 101l8-3 8 3-8 3z" fill="#777"/><circle cx="1825" cy="108" r="4.500" fill="#3a8ee0"/><circle cx="1830" cy="109" r="5" fill="#37a84a"/><path d="M1830 106v6" stroke="#fff" stroke-width="1.500"/>

<!-- trade panel -->
<rect x="965.500" y="117.500" width="176" height="339" fill="#555" stroke="#222"/>
<g class="btn">
<rect x="971.500" y="122.500" width="126" height="14" fill="#c3c3c3"/><rect x="973" y="125" width="66" height="9" fill="#6b8e23"/><text x="1034" y="133" style="font-size:7px;letter-spacing:0;font-weight:bold;fill:#999">ТАЙМЕР</text>
<rect x="1103.500" y="122.500" width="13" height="14" fill="#c3c3c3"/><rect x="1121.500" y="122.500" width="13" height="14" fill="#c3c3c3"/><text x="1128" y="134" style="font-size:12px">x</text>
<rect x="971.500" y="142.500" width="75" height="24" fill="#c9e7c9"/><text x="1009" y="159">00:04:34</text>
<rect x="1058.500" y="142.500" width="75" height="24" fill="#c3c3c3"/><text x="1096" y="159">EPM20</text>
<rect x="971.500" y="172.500" width="75" height="28" fill="#c3c3c3"/><text x="1009" y="192">Buy MRKT</text>
<rect x="1058.500" y="172.500" width="75" height="28" fill="#c3c3c3"/><text x="1096" y="192">Sell MRKT</text>
<rect x="971.500" y="207.500" width="75" height="28" fill="#64e064"/><text x="1009" y="227">Buy LIMIT</text>
<rect x="1058.500" y="207.500" width="75" height="28" fill="#ff91c8"/><text x="1096" y="227">Sell LIMIT</text>
<rect x="971.500" y="242.500" width="75" height="28" fill="#c3c3c3"/><text x="1009" y="262">Разворот</text>
<rect x="1058.500" y="242.500" width="75" height="28" fill="#e69664"/><text x="1096" y="262">Закрыть</text>
<rect x="971.500" y="277.500" width="93" height="19" fill="#c3c3c3"/><text x="1018" y="291" class="s">Объем</text>
<rect x="971.500" y="296.500" width="18" height="19" fill="#c3c3c3"/><text x="980" y="311">-</text>
<rect x="989.500" y="296.500" width="56" height="19" fill="#e6e6e6"/><text x="1015" y="311">2.00</text>
<rect x="1045.500" y="296.500" width="19" height="19" fill="#c3c3c3"/><text x="1055" y="311">+</text>
<rect x="1075.500" y="277.500" width="58" height="38" fill="#c3c3c3"/><text x="1105" y="304" style="font-size:21px;letter-spacing:0;fill:#000">БУ</text>

<rect x="971.500" y="323.500" width="38" height="38" fill="#1eb41e"/><text x="990" y="346" class="s">Вкл.</text>
<rect x="1009.500" y="323.500" width="86" height="19" fill="#c3c3c3"/><text x="1052" y="337" class="s">Стоплосс</text>
<rect x="1009.500" y="342.500" width="18" height="19" fill="#c3c3c3"/><text x="1019" y="357">-</text>
<rect x="1028.500" y="342.500" width="48" height="19" fill="#e6e6e6"/><text x="1052" y="357">250</text>
<rect x="1076.500" y="342.500" width="19" height="19" fill="#c3c3c3"/><text x="1086" y="357">+</text>
<rect x="1095.500" y="323.500" width="38" height="38" fill="#c3c3c3"/><text x="1115" y="346" class="s">Выкл.</text>

<rect x="971.500" y="368.500" width="38" height="38" fill="#1eb41e"/><text x="990" y="391" class="s">Вкл.</text>
<rect x="1009.500" y="368.500" width="86" height="19" fill="#c3c3c3"/><text x="1052" y="382" class="s">Тейкпрофит</text>
<rect x="1009.500" y="387.500" width="18" height="19" fill="#c3c3c3"/><text x="1019" y="402">-</text>
<rect x="1028.500" y="387.500" width="48" height="19" fill="#e6e6e6"/><text x="1052" y="402">125</text>
<rect x="1076.500" y="387.500" width="19" height="19" fill="#c3c3c3"/><text x="1086" y="402">+</text>
<rect x="1095.500" y="368.500" width="38" height="38" fill="#c3c3c3"/><text x="1115" y="391" class="s">Выкл.</text>

<rect x="971.500" y="413.500" width="38" height="38" fill="#c3c3c3"/><text x="990" y="436" class="s">Вкл.</text>
<rect x="1009.500" y="413.500" width="86" height="19" fill="#c3c3c3"/><text x="1052" y="427" class="s">Трейлинг</text>
<rect x="1009.500" y="432.500" width="18" height="19" fill="#c3c3c3"/><text x="1019" y="447">-</text>
<rect x="1028.500" y="432.500" width="48" height="19" fill="#e6e6e6"/><text x="1052" y="447">0</text>
<rect x="1076.500" y="432.500" width="19" height="19" fill="#c3c3c3"/><text x="1086" y="447">+</text>
<rect x="1095.500" y="413.500" width="38" height="38" fill="#f05032"/><text x="1115" y="436" class="s">Выкл.</text>
</g>

<!-- bottom panel -->
<rect x="941" y="774" width="951" height="197" fill="#f0f0f0"/>
<rect x="944.500" y="773.500" width="83" height="18" fill="#fff" stroke="#000"/>
<text x="956" y="787" style="font-size:12px;letter-spacing:-.25px">EPM20,M10</text>
<text x="1041" y="787" style="font-size:12px;letter-spacing:-.25px;fill:#777">MESM20,M10</text><rect x="1126" y="776" width="1" height="13" fill="#999"/><text x="1137" y="787" style="font-size:12px;letter-spacing:-.25px;fill:#777">EPM20,H1</text>
<path d="M1857 779v7l-3.500-3.500zM1876 779v7l3.500-3.500z" fill="#999"/>
<rect x="941" y="792" width="951" height="2" fill="#ddd"/>
<rect x="941" y="797" width="951" height="1" fill="#bbb"/>

<rect x="942" y="810" width="12" height="156" fill="#c8dbea"/>
<path d="M945 800l5 5M950 800l-5 5" stroke="#111" stroke-width="1.800"/>
<text transform="translate(952,965) rotate(-90)" style="font-size:11px;letter-spacing:-.3px;fill:#222">Инструменты</text>

<rect x="956" y="798" width="915" height="124" fill="#fff"/>
<rect x="956" y="842" width="915" height="20" fill="#ebebeb"/><rect x="956" y="882" width="915" height="20" fill="#ebebeb"/>
<path stroke="#c6c6c6" fill="none" d="M956 842.500H1871M956 862.500H1871M956 882.500H1871M956 902.500H1871M1052.500 798V921M1119.500 798V921M1172.500 798V921M1216.500 798V921M1292.500 798V921M1367.500 798V921M1442.500 798V921M1517.500 798V921M1628.500 798V921M1703.500 798V921M1788.500 798V921M1871.500 798V921"/>
<g class="tbl">
<text x="962" y="814">Время</text><text x="1066" y="814">Си...</text>
<path d="M1104 813h8l-4-5z" fill="#444"/>
<g class="r"><text x="1166" y="814">Тикет</text><text x="1211" y="814">Тип</text><text x="1286" y="814">Объем</text><text x="1361" y="814">Цена</text><text x="1436" y="814">S / L</text><text x="1511" y="814">T / P</text><text x="1622" y="814">Время</text><text x="1697" y="814">Цена</text><text x="1783" y="814">Прибыль</text><text x="1865" y="814">Изменение</text></g>
<use href="#doc" x="958" y="823" style="color:#2a8ae0"/><use href="#doc" x="958" y="843" style="color:#2a8ae0"/><use href="#doc" x="958" y="863" style="color:#2a8ae0"/><use href="#doc" x="958" y="883" style="color:#e8562a"/><use href="#doc" x="958" y="903" style="color:#2a8ae0"/>
<g class="d"><text x="977" y="836">2020.06.01 1...</text><text x="977" y="856">2020.06.01 1...</text><text x="977" y="876">2020.06.01 1...</text><text x="977" y="896">2020.06.01 1...</text><text x="977" y="916">2020.06.01 1...</text>
<text x="1124" y="836">571133...</text><text x="1124" y="856">571136...</text><text x="1124" y="876">571139...</text><text x="1124" y="896">571184...</text><text x="1124" y="916">571186...</text></g>
<g class="r d">
<text x="1116" y="836">epm20</text><text x="1213" y="836">buy</text><text x="1288" y="836">2</text><text x="1363" y="836">3036.00</text><text x="1438" y="836">3033.50</text><text x="1625" y="836">2020.06.01 13:42:51</text><text x="1700" y="836">3037.00</text>
<text x="1116" y="856">epm20</text><text x="1213" y="856">buy</text><text x="1288" y="856">2</text><text x="1363" y="856">3038.25</text><text x="1438" y="856">3035.75</text><text x="1625" y="856">2020.06.01 13:44:03</text><text x="1700" y="856">3039.25</text>
<text x="1116" y="876">epm20</text><text x="1213" y="876">buy</text><text x="1288" y="876">2</text><text x="1363" y="876">3038.25</text><text x="1438" y="876">3035.75</text><text x="1625" y="876">2020.06.01 13:44:33</text><text x="1700" y="876">3039.25</text>
<text x="1116" y="896">epm20</text><text x="1213" y="896">sell</text><text x="1288" y="896">2</text><text x="1363" y="896">3038.50</text><text x="1438" y="896">3041.00</text><text x="1625" y="896">2020.06.01 14:00:33</text><text x="1700" y="896">3037.25</text>
<text x="1116" y="916">epm20</text><text x="1213" y="916">buy</text><text x="1288" y="916">2</text><text x="1363" y="916">3040.25</text><text x="1438" y="916">3037.75</text><text x="1625" y="916">2020.06.01 14:01:49</text><text x="1700" y="916">3041.50</text>
</g>
</g>
<g class="r bl"><text x="1785" y="836">100.00</text><text x="1867" y="836">0.03 %</text><text x="1785" y="856">100.00</text><text x="1867" y="856">0.03 %</text><text x="1785" y="876">100.00</text><text x="1867" y="876">0.03 %</text><text x="1785" y="896">125.00</text><text x="1867" y="896">0.04 %</text><text x="1785" y="916">125.00</text><text x="1867" y="916">0.04 %</text></g>
<!-- summary -->
<rect x="956" y="921" width="915" height="21" fill="#c3c3c3"/>
<circle cx="965" cy="931" r="5" fill="none" stroke="#222" stroke-width="1.300"/><path d="M962 931h6M965 928v6" stroke="#222"/>
<g class="hb"><text x="977" y="936">Прибыль: 402.80</text><text x="1082" y="936">Кредит: 0.00</text><text x="1160" y="936">Депозит: 0.00</text><text x="1245" y="936">Снятие: 0.00</text><text x="1323" y="936">Баланс: 402.80</text><text x="1785" y="936" text-anchor="end">575.00</text></g>
<!-- scrollbar -->
<rect x="1871" y="798" width="18" height="145" fill="#f0f0f0"/><rect x="1872" y="906" width="15" height="21" fill="#cdcdcd"/>
<path d="M1876 809l4-4 4 4M1876 932l4 4 4-4" fill="none" stroke="#555" stroke-width="1.800"/>
<path d="M956 943.500H1888" stroke="#000"/>
<!-- bottom tabs -->
<rect x="1090.500" y="943.500" width="66" height="22" fill="#fff" stroke="#000"/>
<g class="tabs"><text x="968" y="958">Торговля</text><text x="1039" y="958">Активы</text><text x="1100" y="958" style="fill:#111">История</text><text x="1167" y="958">Новости</text><text x="1234" y="958">Почта</text><text x="1270" y="961" style="fill:#f02020;font-weight:bold;font-size:10px">7</text><text x="1295" y="958">Календарь</text><text x="1373" y="958">Компания</text><text x="1449" y="958">Маркет</text><text x="1510" y="958">Алерты</text><text x="1572" y="958">Сигналы</text><text x="1641" y="958">Статьи</text><text x="1698" y="958">Библиотека</text><text x="1783" y="958">VPS</text><text x="1823" y="958">Эксперты</text></g>
<path d="M1029.500 948v13M1224.500 948v13M1285.500 948v13M1363.500 948v13M1439.500 948v13M1500.500 948v13M1562.500 948v13M1631.500 948v13M1688.500 948v13M1773.500 948v13M1813.500 948v13M1887.500 948v13" stroke="#888" fill="none"/>
<rect x="940" y="968" width="952" height="1" fill="#bbb"/>
</svg>
</body></html>
